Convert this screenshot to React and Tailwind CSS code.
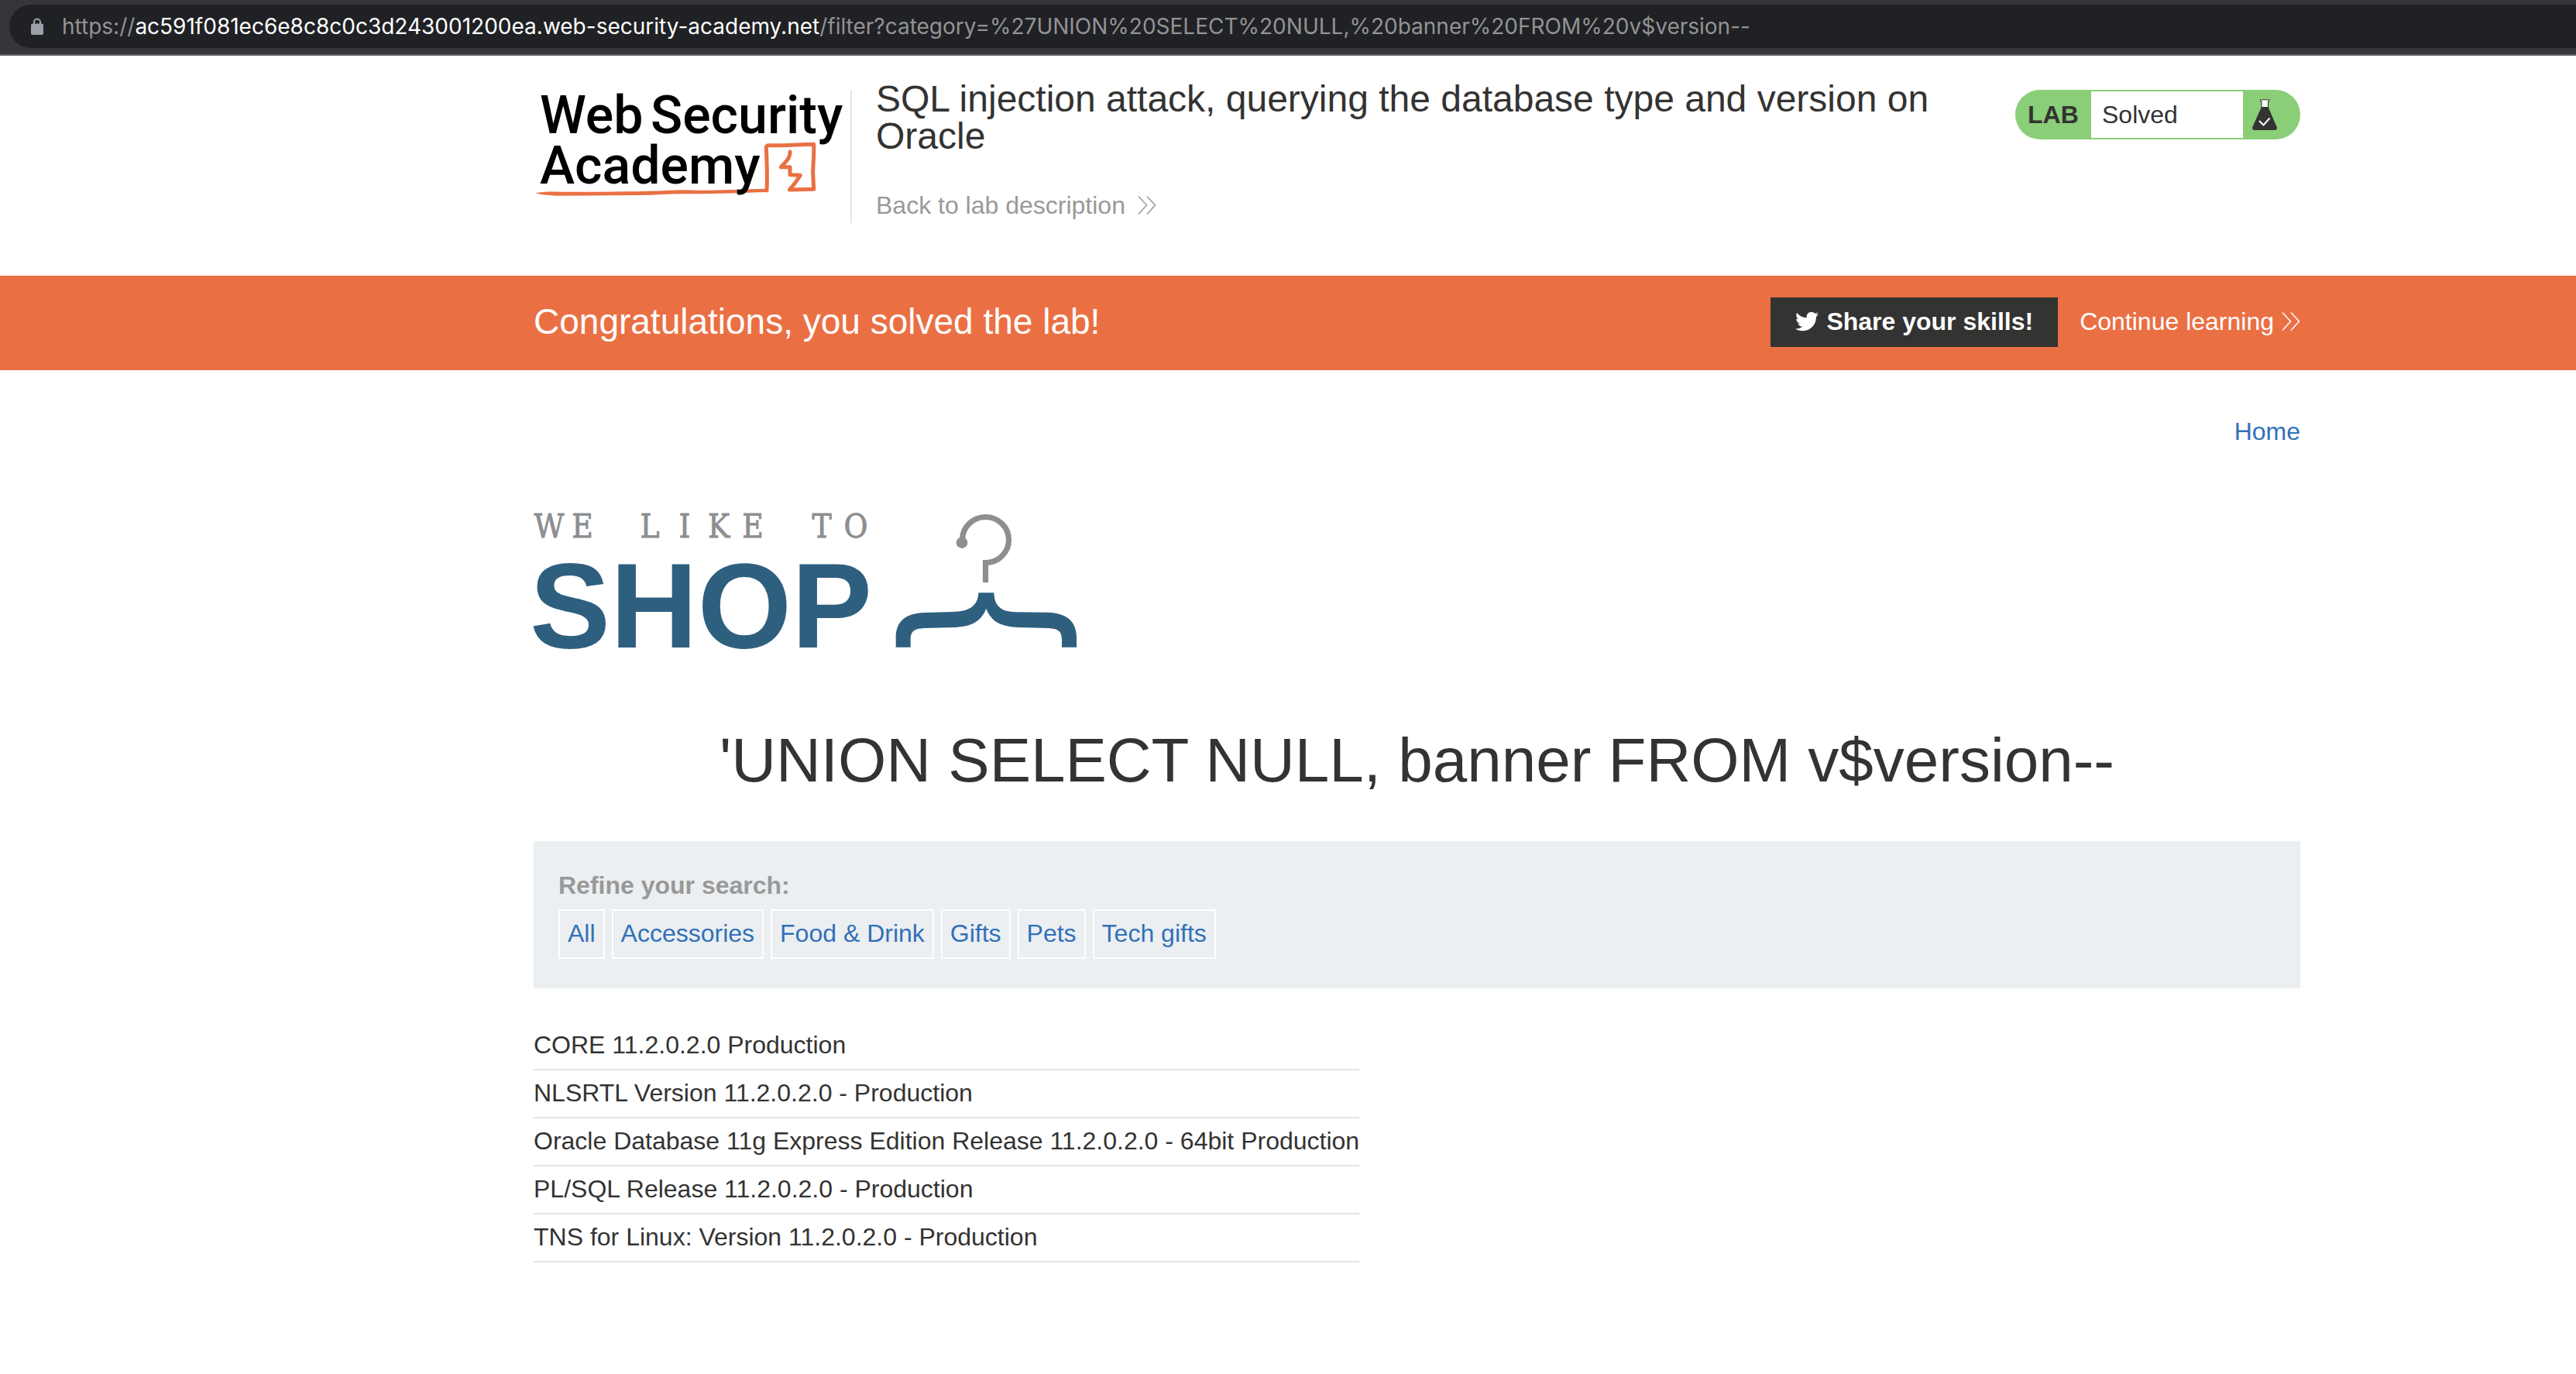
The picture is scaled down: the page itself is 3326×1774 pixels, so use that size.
import { FaTwitter } from "react-icons/fa";

const categories = ["All", "Accessories", "Food & Drink", "Gifts", "Pets", "Tech gifts"];

const banners = [
  "CORE 11.2.0.2.0 Production",
  "NLSRTL Version 11.2.0.2.0 - Production",
  "Oracle Database 11g Express Edition Release 11.2.0.2.0 - 64bit Production",
  "PL/SQL Release 11.2.0.2.0 - Production",
  "TNS for Linux: Version 11.2.0.2.0 - Production",
];

function LockIcon() {
  return (
    <svg className="h-6 w-4 shrink-0" viewBox="0 0 16 24" aria-hidden="true">
      <path d="M4 9V6.500a4 4 0 0 1 8 0V9" fill="none" stroke="#9aa0a6" strokeWidth="2" />
      <rect x="0" y="8.500" width="16" height="14.500" rx="2" fill="#9aa0a6" />
    </svg>
  );
}

function DoubleChevron() {
  return (
    <svg className="h-6 w-6 shrink-0" viewBox="0 0 24 24" fill="none" stroke="currentColor" strokeWidth="1.500" aria-hidden="true">
      <path d="M1 0.500 11.500 12 1 23.500M12 0.500 22.500 12 12 23.500" />
    </svg>
  );
}

function AcademyLogo() {
  return (
    <svg className="h-[160px] w-[409px] shrink-0" viewBox="689 100 409 160" role="img" aria-label="Web Security Academy">
      <g transform="translate(680 90) scale(0.33333)" fill="none" stroke="#ea7044" strokeLinejoin="round" strokeLinecap="round">
        <path
          d="M33 478C60 473 85 472 130 473C300 474 450 473 600 466C700 470 830 463 925 461L935 474C820 476 740 482 620 481C560 480 500 486 440 486L110 488C80 486 55 484 33 478Z"
          fill="#ea7044"
          stroke="none"
        />
        <path
          d="M930 468C933 410 930 350 928 302Q928 293 938 293C1000 295 1050 290 1112 289C1114 330 1109 370 1109 400L1112 463L1018 465C1034 448 1046 430 1060 409L1020 407L1020 377L985 377C1000 358 1022 345 1020 318"
          strokeWidth="15"
        />
      </g>
      <g fontFamily="Roboto, sans-serif" fontWeight="500" fontSize="68" fill="#000">
        <text x="697" y="172">Web</text>
        <text x="840" y="172">Security</text>
        <text x="697" y="237">Academy</text>
      </g>
    </svg>
  );
}

function FlaskIcon() {
  return (
    <svg className="h-10 w-8" viewBox="0 0 32 40" aria-hidden="true">
      <path d="M10.500 0.800h11.500v1.900h-1.500V11h-8.500V2.700h-1.500z" fill="#fff" stroke="#333332" strokeWidth="1" />
      <path d="M12 10h8.500l11 25.500c1 2.500 0 4.500-2.500 4.500H3c-2.500 0-3.500-2-2.500-4.500z" fill="#333332" />
      <path d="M9 28l5.500 5.500L22.500 24.500" fill="none" stroke="#fff" strokeWidth="2" />
    </svg>
  );
}

function ShopLogo() {
  return (
    <svg className="-ml-2.5 h-[240px] w-[720px]" viewBox="679 640 720 240" role="img" aria-label="We like to shop">
      <text
        x="709 752 796 839 884 928 972 1017 1061 1105"
        y="694"
        textAnchor="middle"
        fontFamily="'DejaVu Serif Condensed', 'DejaVu Serif', serif"
        fontSize="42"
        fill="#8d8e90"
        stroke="#8d8e90"
        strokeWidth="0.800"
      >
        WE LIKE TO
      </text>
      <text x="684" y="836" fontFamily="'Liberation Sans', sans-serif" fontWeight="700" fontSize="156" fill="#2f5f7f">
        SHOP
      </text>
      <path d="M1242.500 697A30 29.500 0 1 1 1272.500 726.500V752" fill="none" stroke="#8d8e90" strokeWidth="7.200" />
      <circle cx="1242" cy="700.700" r="7.300" fill="#8d8e90" />
      <path
        transform="translate(1140 640) scale(0.33333)"
        d="M370 376H430C432 430 460 450 515 451L640 452C710 455 750 485 750 550V587H693V560C693 525 680 515 640 513L525 510C460 507 420 490 400 437C380 490 340 507 280 510L160 513C120 515 107 525 107 560V587H50V550C50 485 90 455 160 453L270 450C330 449 368 430 370 376Z"
        fill="#2f5f7f"
      />
    </svg>
  );
}

export default function App() {
  return (
    <div className="min-h-screen bg-white font-['Liberation_Sans',Arial,sans-serif] text-[32px] leading-9 text-[#333332]">
      <div className="border-b-2 border-[#6a6368] bg-[#35363a] pt-1.5 pb-2 pl-3">
        <div className="flex h-14 items-center gap-6 rounded-l-full bg-[#202124] pl-7 font-[Inter,sans-serif] text-[28px] leading-9 whitespace-nowrap text-[#929395]">
          <LockIcon />
          <p>
            https://
            <span className="text-white">ac591f081ec6e8c8c0c3d243001200ea.web-security-academy.net</span>
            /filter?category=%27UNION%20SELECT%20NULL,%20banner%20FROM%20v$version--
          </p>
        </div>
      </div>

      <header className="flex items-start pt-7 pr-[356px] pb-[68px] pl-[689px]">
        <AcademyLogo />
        <div className="mt-4 h-[172px] w-0.5 shrink-0 bg-[#e5e5e5]" />
        <div className="ml-[31px] w-[1400px]">
          <h2 className="mt-1 text-[48px] leading-[48px]">
            SQL injection attack, querying the database type and version on Oracle
          </h2>
          <a href="#lab" className="mt-[47px] flex items-center gap-4 text-[#999999]">
            Back to lab description
            <DoubleChevron />
          </a>
        </div>
        <div className="mt-4 ml-auto flex h-16 items-stretch overflow-hidden rounded-full border-y-2 border-[#8ace78] bg-[#8ace78] leading-[60px]">
          <span className="w-[98px] pl-4 font-bold">LAB</span>
          <span className="w-[196px] bg-white pl-3.5">Solved</span>
          <span className="flex w-[74px] items-center pl-3">
            <FlaskIcon />
          </span>
        </div>
      </header>

      <section className="flex items-start justify-between bg-[#ea7044] pt-7 pr-[356px] pb-[30px] pl-[689px] text-white">
        <h4 className="text-[46px] leading-[62px]">Congratulations, you solved the lab!</h4>
        <div className="flex items-center">
          <button type="button" className="flex h-16 items-center gap-2.5 bg-[#333332] px-8 pb-0.5 font-bold">
            <FaTwitter className="h-8 w-[30px]" />
            Share your skills!
          </button>
          <a href="#learn" className="ml-7 flex items-center gap-2.5 pb-0.5">
            Continue learning
            <DoubleChevron />
          </a>
        </div>
      </section>

      <main className="pt-[61px] pr-[356px] pb-16 pl-[689px]">
        <nav className="flex justify-end">
          <a href="#home" className="text-[#3270b8]">
            Home
          </a>
        </nav>
        <div className="mt-[65px]">
          <ShopLogo />
        </div>
        <h1 className="mt-[62px] text-center text-[80px] leading-[80px]">
          'UNION SELECT NULL, banner FROM v$version--
        </h1>
        <section className="mt-16 bg-[#ebeff2] px-8 pt-[39px] pb-[38px]">
          <p className="font-bold text-[#999999]">Refine your search:</p>
          <div className="mt-[13px] flex gap-[9px] text-[#3270b8]">
            {categories.map((name) => (
              <a key={name} href="#filter" className="border-2 border-white px-2.5 pt-[11px] pb-[13px] leading-9">
                {name}
              </a>
            ))}
          </div>
        </section>
        <table className="mt-11 border-collapse text-left whitespace-nowrap">
          <tbody>
            {banners.map((name) => (
              <tr key={name} className="border-b-2 border-[#e5e5e5]">
                <td className="pt-[11px] pb-[13px]">{name}</td>
              </tr>
            ))}
          </tbody>
        </table>
      </main>
    </div>
  );
}
